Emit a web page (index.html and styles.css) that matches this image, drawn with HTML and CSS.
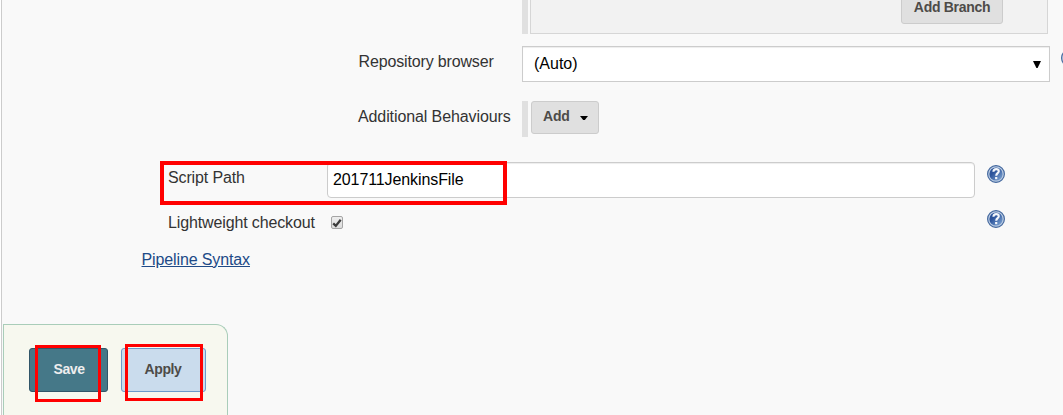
FILE: index.html
```html
<!DOCTYPE html>
<html lang="en">
<head>
<meta charset="utf-8">
<title>Pipeline configuration</title>
<link rel="stylesheet" href="styles.css">
</head>
<body>
<svg class="defs" width="0" height="0" aria-hidden="true">
  <defs>
    <linearGradient id="blue" x1="0" y1="0" x2="1" y2="1">
      <stop offset="0.35" stop-color="#2c549b"/>
      <stop offset="1" stop-color="#86acd8"/>
    </linearGradient>
    <symbol id="help" viewBox="0 0 18 18">
      <circle cx="9" cy="9" r="8.4" fill="#bccde3" stroke="#45699f" stroke-width="1.2"/>
      <circle cx="9" cy="9" r="6.6" fill="url(#blue)"/>
      <path d="M6.4 6.8C6.5 5 7.5 4.1 9.2 4.1C10.8 4.1 11.8 5 11.8 6.3C11.8 8.2 9.2 8.2 9.2 10.7" fill="none" stroke="#f4f7fb" stroke-width="2.1"/>
      <rect x="8.1" y="12" width="2.2" height="2.2" fill="#f4f7fb"/>
    </symbol>
  </defs>
</svg>
<main class="panel">
  <section class="repeat-row">
    <span class="handle"></span>
    <div class="branches"><button class="btn branch-btn">Add Branch</button></div>
  </section>
  <section class="browser-row">
    <label class="label browser-label">Repository browser</label>
    <div class="select"><span class="auto">(Auto)</span><svg class="arrow" width="8" height="7" viewBox="0 0 8 7"><path d="M0 0H8L4.6 7H3.4Z"/></svg></div>
    <svg class="help" width="18" height="18"><use href="#help"/></svg>
  </section>
  <section class="behaviour-row">
    <label class="label behaviour-label">Additional Behaviours</label>
    <span class="handle"></span>
    <button class="btn add-btn"><span>Add</span><svg width="8" height="4" viewBox="0 0 8 4"><path d="M0 0H8L4.8 4H3.2Z"/></svg></button>
  </section>
  <section class="script-row">
    <label class="label script-label">Script Path</label>
    <div class="input"><span class="filename">201711JenkinsFile</span></div>
    <svg class="help" width="18" height="18"><use href="#help"/></svg>
    <span class="mark script-mark"></span>
  </section>
  <section class="checkout-row">
    <label class="label checkout-label">Lightweight checkout</label>
    <span class="check"><svg width="10" height="10" viewBox="0 0 10 10"><path d="M1.2 5.4L3.8 7.9L8.7 1.8" fill="none" stroke="#3c3c3c" stroke-width="2.3"/></svg></span>
    <svg class="help" width="18" height="18"><use href="#help"/></svg>
  </section>
  <a class="syntax">Pipeline Syntax</a>
  <footer class="actions">
    <button class="action save"><span>Save</span><i class="mark save-mark"></i></button>
    <button class="action apply"><span>Apply</span><i class="mark apply-mark"></i></button>
  </footer>
</main>
</body>
</html>
```
FILE: styles.css
```css
* { box-sizing: border-box; }
body {
  margin: 0;
  overflow: hidden;
  background: #fff;
  color: #333;
  font: 16px/20px "Liberation Sans", Arial, sans-serif;
}
.defs { position: absolute; }
.panel {
  display: flex;
  flex-direction: column;
  width: 1062px;
  height: 415px;
  margin-left: 1px;
  border-left: 1px solid #ccc;
  background: #f9f9f9;
}
.panel > section { display: flex; flex: none; }
.label { flex: none; white-space: nowrap; letter-spacing: -.13px; }
.handle { flex: none; width: 6px; background: #e0e0e0; }
.btn {
  border: 1px solid #ccc;
  border-radius: 3px;
  background: #e0e0e0;
  color: #4d4b48;
  font: bold 14px/18px "Liberation Sans", Arial, sans-serif;
  padding: 0;
  white-space: nowrap;
}
.repeat-row { height: 34px; padding-left: 520px; }
.branches {
  display: flex;
  justify-content: flex-end;
  width: 518px;
  margin-left: 2px;
  padding-right: 44px;
  border: 1px solid #d6d6d6;
  border-top: 0;
  background: #f2f2f2;
}
.branch-btn {
  width: 102px;
  height: 33px;
  margin-top: -9px;
  padding-bottom: 1px;
  letter-spacing: -.3px;
}
.browser-row { height: 36px; margin-top: 12px; padding-left: 356.5px; }
.browser-label { width: 163.5px; padding-top: 6px; letter-spacing: -.15px; }
.select {
  display: flex;
  flex: none;
  justify-content: space-between;
  align-items: center;
  width: 528px;
  height: 36px;
  padding: 0 8px 0 11px;
  border: 1px solid #ccc;
  background: #fff;
  box-shadow: inset 0 1px 1px rgba(0, 0, 0, .075);
  color: #000;
}
.help { flex: none; margin: 3px 0 0 12px; }
.browser-row .help { margin-left: 11px; }
.behaviour-row { height: 36px; margin-top: 19px; padding-left: 356px; }
.behaviour-label { width: 164px; padding-top: 6px; letter-spacing: -.1px; }
.add-btn {
  display: flex;
  align-items: center;
  width: 68px;
  height: 33px;
  margin-left: 3px;
  padding: 0 0 4px 11px;
  letter-spacing: -.2px;
}
.add-btn svg { margin: 4px 0 0 10px; }
.script-row { position: relative; height: 36px; margin-top: 25px; padding-left: 166px; }
.script-label { width: 159px; padding-top: 6px; }
.input {
  flex: none;
  width: 648px;
  height: 36px;
  padding: 7px 5px;
  border: 1px solid #ccc;
  border-radius: 4px;
  background: #fff;
  box-shadow: inset 0 1px 1px rgba(0, 0, 0, .075);
  color: #000;
  letter-spacing: -.1px;
}
.checkout-row { height: 24px; margin-top: 9px; padding-left: 166px; }
.checkout-label { width: 163px; padding-top: 6px; }
.check {
  display: flex;
  flex: none;
  align-items: center;
  justify-content: center;
  width: 12px;
  height: 13px;
  margin-top: 9px;
  border: 1px solid #a5a5a5;
  border-radius: 2px;
  background: linear-gradient(#eee, #dcdcdc);
}
.check svg { flex: none; }
.checkout-row .help { margin-left: 644px; }
.syntax {
  align-self: flex-start;
  margin: 19px 0 0 139.5px;
  color: #204a87;
  letter-spacing: -.12px;
  text-decoration: underline;
  white-space: nowrap;
}
.actions {
  display: flex;
  flex: none;
  gap: 13px;
  width: 225px;
  height: 91px;
  margin: auto 0 0 1px;
  padding: 23px 0 0 25px;
  border: 1px solid #a9cdb9;
  border-bottom: 0;
  border-radius: 0 12px 0 0;
  background: #f7f8ef;
}
.action {
  position: relative;
  width: 79px;
  height: 44px;
  padding: 0 0 2px 1px;
  border-radius: 3px;
  font: bold 14px/18px "Liberation Sans", Arial, sans-serif;
  letter-spacing: -.4px;
}
.save { border: 1px solid #315568; background: #457888; color: #eee; }
.apply { width: 85px; padding-left: 0; padding-right: 1px; border: 1px solid #6b9bcb; background: #cadced; color: #4d4b48; }
.mark { position: absolute; border: 3px solid #f00; pointer-events: none; }
.script-mark { left: 158px; top: -1px; width: 347px; height: 44px; border-width: 4px; }
.save-mark { left: 5px; top: -4px; width: 66px; height: 57px; }
.apply-mark { left: 3px; top: -5px; width: 78px; height: 57px; }
```
